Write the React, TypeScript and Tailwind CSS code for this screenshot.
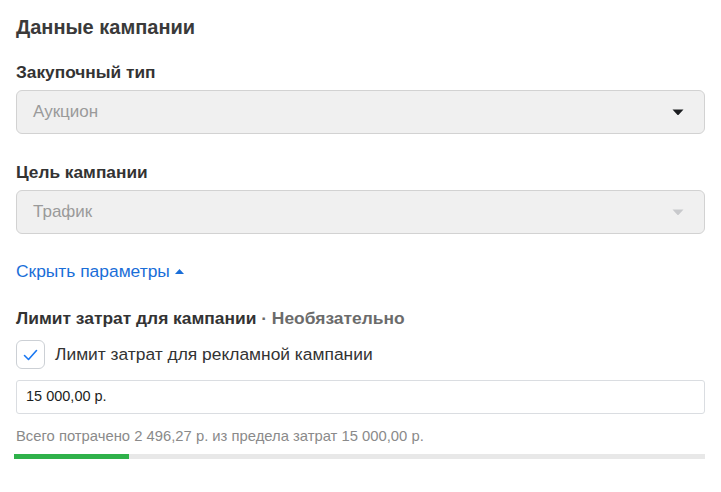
import React from "react";

function Caret({ color }: { color: string }) {
  return (
    <svg width="12" height="7" viewBox="0 0 12 7" aria-hidden>
      <path d="M0.5 0.5h11L6.9 5.6a1.2 1.2 0 0 1-1.8 0z" fill={color} />
    </svg>
  );
}

function SelectBox({ value, caret }: { value: string; caret: string }) {
  return (
    <div className="mt-[8px] flex h-[44px] items-center justify-between rounded-[6px] border border-[#d2d2d2] bg-[#f0f0f0] pl-[16px] pr-[20px]">
      <span className="text-[17px] text-[#9a9a9a]">{value}</span>
      <Caret color={caret} />
    </div>
  );
}

export default function App() {
  return (
    <div
      className="min-h-[492px] bg-white px-[16px] pt-[15px] text-[#1c1e21]"
      style={{ fontFamily: "'Liberation Sans', Arial, sans-serif" }}
    >
      <h2 className="text-[20px] font-bold leading-[24px] text-[#3a3a3a]">Данные кампании</h2>

      <div className="mt-[23px] text-[17.3px] font-bold leading-[20px] text-[#333]">Закупочный тип</div>
      <SelectBox value="Аукцион" caret="#1c1e21" />

      <div className="mt-[28px] text-[17.3px] font-bold leading-[20px] text-[#333]">Цель кампании</div>
      <SelectBox value="Трафик" caret="#c8c9cc" />

      <div className="mt-[27px] flex items-center gap-[5px] text-[17.4px] leading-[20px] text-[#1a6ed8]">
        <span>Скрыть параметры</span>
        <svg width="9" height="5" viewBox="0 0 9 5" aria-hidden>
          <path d="M0 5h9L4.5 0z" fill="#1a6ed8" />
        </svg>
      </div>

      <div className="mt-[27px] text-[17.4px] font-bold leading-[20px] text-[#333]">
        Лимит затрат для кампании <span className="text-[#6b6b6b]">· Необязательно</span>
      </div>

      <div className="mt-[12px] flex items-center gap-[10px]">
        <div className="flex h-[29px] w-[29px] items-center justify-center rounded-[6px] border border-[#ccd0d5] bg-white">
          <svg width="15" height="12" viewBox="0 0 15 12" aria-hidden>
            <path d="M1.5 6.5l4 4L13.5 1.5" fill="none" stroke="#1877f2" strokeWidth="1.6" strokeLinecap="round" strokeLinejoin="round" />
          </svg>
        </div>
        <span className="text-[17.4px] text-[#333]">Лимит затрат для рекламной кампании</span>
      </div>

      <div className="mt-[11px] flex h-[34px] items-center rounded-[3px] border border-[#dadde1] bg-white px-[9px] text-[14.5px] text-[#1c1e21]">
        15 000,00 р.
      </div>

      <div className="mt-[13px] text-[14.8px] leading-[18px] text-[#8a8a8a]">
        Всего потрачено 2 496,27 р. из предела затрат 15 000,00 р.
      </div>

      <div className="-ml-[2px] mt-[9px] flex h-[5px] bg-[#e8e8e8]">
        <div className="h-full w-[115px] bg-[#2fb14a]" />
      </div>
    </div>
  );
}
